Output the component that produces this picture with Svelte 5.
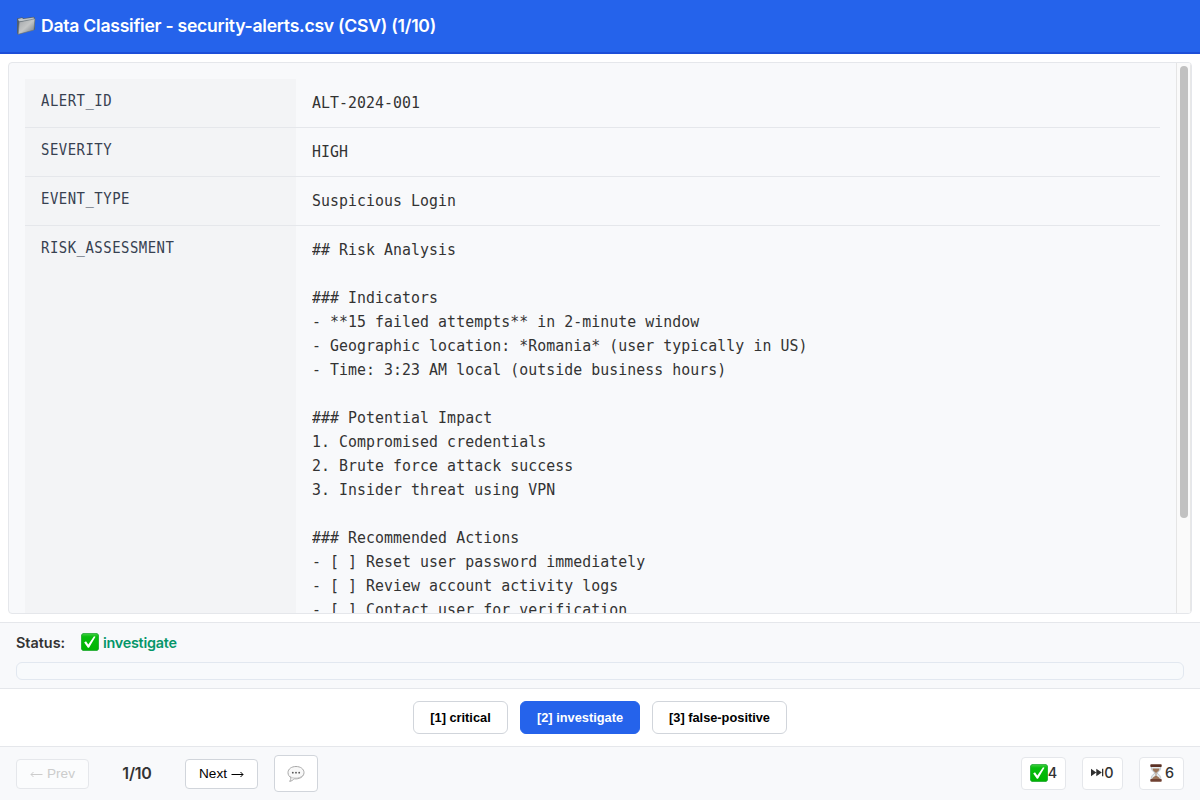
<script>
  const rows = [
    ['ALERT_ID', 'ALT-2024-001'],
    ['SEVERITY', 'HIGH'],
    ['EVENT_TYPE', 'Suspicious Login'],
    ['RISK_ASSESSMENT', `## Risk Analysis

### Indicators
- **15 failed attempts** in 2-minute window
- Geographic location: *Romania* (user typically in US)
- Time: 3:23 AM local (outside business hours)

### Potential Impact
1. Compromised credentials
2. Brute force attack success
3. Insider threat using VPN

### Recommended Actions
- [ ] Reset user password immediately
- [ ] Review account activity logs
- [ ] Contact user for verification`]
  ];
  const labels = [
    { text: '[1] critical', width: 95 },
    { text: '[2] investigate', width: 120 },
    { text: '[3] false-positive', width: 135 }
  ];
  let selected = $state(1);
</script>

{#snippet check()}
  <svg class="check" width="18" height="18" viewBox="0 0 18 18">
    <defs>
      <linearGradient id="green" x1="0" y1="0" x2="0" y2="1">
        <stop offset="0" stop-color="#45cf45" /><stop offset=".2" stop-color="#07bd0d" /><stop offset="1" stop-color="#00b400" />
      </linearGradient>
    </defs>
    <rect x=".4" y=".4" width="17.2" height="17.2" rx="2.6" fill="url(#green)" stroke="#17a52a" stroke-width=".8" />
    <path d="M3.2 9.6 5 8.3 7.3 11.5 13 3.2 14.5 3.8 8 14.7H6.9Z" fill="#fff" />
  </svg>
{/snippet}

<div class="app">
  <header>
    <svg width="20" height="20" viewBox="0 0 20 20">
      <defs>
        <linearGradient id="folder" x1="0" y1="0" x2="1" y2="1">
          <stop offset="0" stop-color="#a0a4a8" /><stop offset=".5" stop-color="#c4c6c6" /><stop offset="1" stop-color="#6d757e" />
        </linearGradient>
      </defs>
      <path d="M1 2.6 6.3 1.200 7.500 2.200 18 .8 19 2.200V13.500L2 18.600 1 17Z" fill="#4d5d70" />
      <path d="M2 3 6 2 7.200 3.100 17.800 1.500V3.700L3 5.500Z" fill="#bfc5c9" />
      <path d="M3.200 6 19 2.800 17.900 14.100 2.200 18.300Z" fill="url(#folder)" stroke="#6c757c" stroke-width=".6" />
    </svg>
    <h1>Data Classifier - security-alerts.csv (CSV) (1/10)</h1>
  </header>

  <main>
    <section class="card">
      <div class="content">
        {#each rows as [name, value]}
          <div class="row">
            <div class="name"><span>{name}</span></div>
            <div class="value"><pre>{value}</pre></div>
          </div>
        {/each}
      </div>
      <div class="track"><div class="thumb"></div></div>
    </section>
  </main>

  <section class="status">
    <div class="line"><b>Status:</b>{@render check()}<strong>investigate</strong></div>
    <div class="meter"></div>
  </section>

  <section class="labels">
    {#each labels as label, i}
      <button class:active={selected === i} style="width: {label.width}px" onclick={() => (selected = i)}>{label.text}</button>
    {/each}
  </section>

  <footer>
    <button class="nav prev" disabled><svg width="13" height="8" viewBox="0 0 13 8"><path d="M12.5 4.500H1M3.500 2 1 4.500 3.500 7" /></svg>Prev</button>
    <span class="position">1/10</span>
    <button class="nav next">Next<svg width="13" height="8" viewBox="0 0 13 8"><path d="M.5 4.500H12M9.500 2 12 4.500 9.500 7" /></svg></button>
    <button class="comment" aria-label="Comment">
      <svg width="18" height="18" viewBox="0 0 18 18">
        <path d="M9 1.500C4.500 1.500 1 4 1 7.600c0 2.300 1.200 4.100 3 5.100 0 1.300-.6 2.300-1.300 3.700 2-.4 3.400-1.400 4.400-2.600 5.300.6 9.900-2 9.900-6.200C17 4 13.500 1.500 9 1.500Z" fill="#f8f8f8" stroke="#a8a8a8" />
        <path d="M3 11.200c1 1 2 1.700 4 1.900 4.500.5 8-1 9.300-3.500" fill="none" stroke="#c0c0c0" />
        <circle cx="5.800" cy="7.700" r=".9" fill="#555" /><circle cx="9" cy="7.700" r=".9" fill="#555" /><circle cx="12.200" cy="7.700" r=".9" fill="#555" />
      </svg>
    </button>
    <div class="stats">
      <span class="stat">{@render check()}4</span>
      <span class="stat skip"><svg width="13" height="9" viewBox="0 0 13 9"><path d="M0 .8 5.300 4.500 0 8.200ZM5.300 .8 10.800 4.500 5.300 8.200ZM11 .8h1.300v7.400H11Z" fill="#303030" /></svg>0</span>
      <span class="stat glass">
        <svg width="14" height="18" viewBox="0 0 14 18">
          <path d="M2.200 2.500c0 3.500 1.300 4.700 3.800 6.500-2.500 1.800-3.800 3-3.800 6.500h9.600c0-3.500-1.300-4.700-3.800-6.500 2.500-1.800 3.800-3 3.800-6.500Z" fill="#e5ecef" stroke="#a9b2b8" stroke-width=".7" />
          <path d="M3.400 4.500h7.200C10.300 6.500 9 7.600 7.400 8.700v3.100c1.800.8 3.100 1.800 3.700 3.500H2.900c.6-1.700 1.900-2.700 3.700-3.500V8.700C5 7.600 3.700 6.500 3.400 4.500Z" fill="#9b7559" />
          <rect x="1.300" y=".3" width="11.400" height="2.700" rx=".8" fill="#5b3023" /><rect x="1.300" y="15" width="11.400" height="2.700" rx=".8" fill="#704132" />
        </svg>6</span>
    </div>
  </footer>
</div>

<style>
  :global(body) { margin: 0; background: #fff; }
  .app { width: 1200px; height: 800px; display: flex; flex-direction: column; overflow: hidden; color: #333; font-family: Inter, "Liberation Sans", sans-serif; }
  .app * { box-sizing: border-box; }
  svg { flex: none; display: block; }
  header { height: 54px; flex: none; display: flex; align-items: center; padding: 0 16px; background: #2563eb; border-bottom: 2px solid #1d4ed8; color: #fff; }
  h1 { margin: 0 0 0 5px; font-size: 17.6px; font-weight: 600; line-height: 24px; letter-spacing: -.26px; white-space: nowrap; }
  main { height: 568px; flex: none; padding: 8px; }
  .card { height: 552px; display: flex; overflow: hidden; background: #f8f9fb; border: 1px solid #e5e7eb; border-radius: 4px; }
  .content { flex: 1; min-width: 0; padding: 16px; overflow: hidden; }
  .track { width: 15px; border-left: 1px solid #e5e5e5; border-right: 1px solid #e8e8e8; background: #fafafa; padding: 3px 0 0 3px; }
  .thumb { width: 8px; height: 452px; border-radius: 4px; background: #c1c1c1; }
  .row { display: flex; min-height: 49px; border-bottom: 1px solid #e5e7eb; }
  .name { width: 271px; flex: none; padding: 12px 16px; background: #f3f4f6; color: #374151; font: 15px/21px "DejaVu Sans Mono", monospace; }
  .name span { display: block; width: max-content; letter-spacing: .53px; transform: scaleX(.93); transform-origin: left; }
  .value { padding: 12px 16px; }
  pre { margin: 0; color: #333; font: 16.5px/24px "DejaVu Sans Mono", monospace; letter-spacing: .075px; transform: scaleX(.9); transform-origin: left; width: max-content; }
  .status { height: 67px; flex: none; padding: 7px 16px 8px; background: #f8f9fb; border: solid #e5e7eb; border-width: 1px 0; }
  .line { height: 24px; display: flex; align-items: center; font-size: 14.4px; margin-bottom: 8px; }
  .line b { font-weight: 600; width: 65px; letter-spacing: 0; }
  .line strong { color: #059669; font-weight: 600; margin-left: 4px; letter-spacing: -.26px; }
  .meter { height: 18px; border: 1px solid #e2e8f0; border-radius: 6px; background: #f8fafc; }
  .labels { height: 57px; flex: none; display: flex; justify-content: center; align-items: center; gap: 12px; background: #fff; }
  button { font-family: "Liberation Sans", Arial, sans-serif; padding: 0; background: #fff; border: 1px solid #d1d5db; color: #000; }
  .labels button { height: 33px; border-radius: 6px; font-size: 12.8px; font-weight: 700; white-space: nowrap; }
  .labels .active { background: #2563eb; border-color: #2563eb; color: #fff; }
  footer { height: 54px; flex: none; display: flex; align-items: center; padding: 0 16px; background: #f8f9fb; border-top: 1px solid #e5e7eb; }
  .nav { width: 73px; height: 30px; border-radius: 4px; display: flex; align-items: center; justify-content: center; gap: 4px; font-size: 13.6px; }
  .nav path { fill: none; stroke: currentColor; }
  .prev { background: #fbfcfd; border-color: #e5e7eb; color: #ccc; }
  .position { width: 96px; text-align: center; font-size: 16px; font-weight: 600; letter-spacing: -.2px; padding-bottom: 1px; }
  .comment { width: 44px; height: 37px; margin-left: 16px; border-radius: 4px; display: flex; align-items: center; justify-content: center; }
  .stats { display: flex; gap: 16px; margin-left: auto; }
  .stat { width: 45px; height: 33px; display: flex; align-items: center; justify-content: center; background: #fff; border: 1px solid #e5e7eb; border-radius: 4px; font-size: 14.4px; font-weight: 500; padding-bottom: 2px; }
  .skip { width: 41px; }
  .glass { gap: 2px; }
</style>
